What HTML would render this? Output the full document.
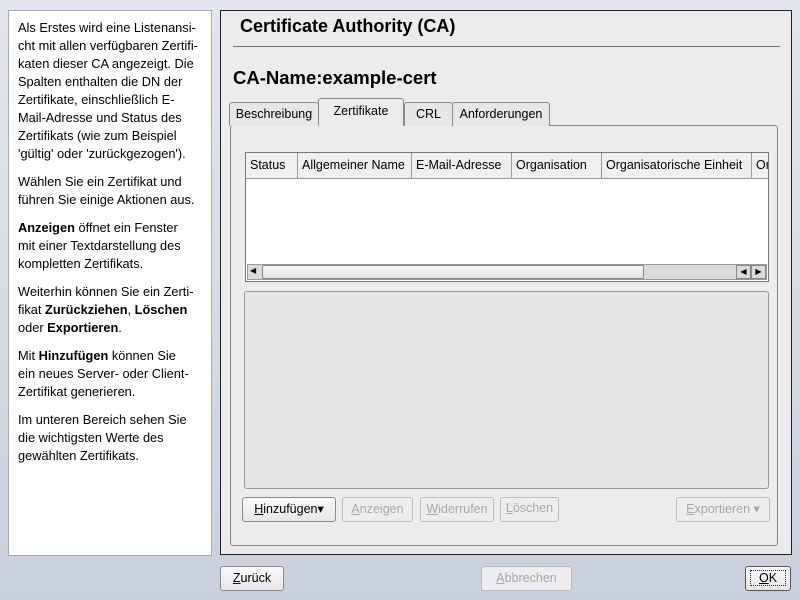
<!DOCTYPE html>
<html><head><style>
*{box-sizing:border-box;margin:0;padding:0}
body{width:800px;height:600px;overflow:hidden;background:linear-gradient(#e3e6ee,#c9d0dc);font-family:"Liberation Sans",sans-serif;font-size:12.5px;color:#000;position:relative}
.a{position:absolute}
#left{left:8px;top:10px;width:204px;height:546px;background:#fff;border:1px solid #a8a8b0;padding:8px 9px;line-height:18px;font-size:12.8px;white-space:nowrap}
#left p{margin-bottom:10px}
#main{left:220px;top:10px;width:572px;height:545px;background:#eeebee;border:1px solid #222}
.btn{position:absolute;height:25px;border:1px solid #888;border-radius:3px;background:linear-gradient(#fafafa,#e8e6e8);text-align:center;line-height:23px;font-size:12.5px}
.dis{color:#a8a8a8;border-color:#bbb;background:#efecef}
.tab{position:absolute;top:102px;height:24px;border:1px solid #888;border-bottom:none;background:#e8e6e8;line-height:22px;text-align:center;border-radius:3px 3px 0 0}
.th{position:absolute;top:0;height:25px;border-right:1px solid #999;line-height:25px;padding-left:4px;background:#f0eef0}
u{text-decoration:underline}
</style></head><body>
<div id="left" class="a">
<p>Als Erstes wird eine Listenansi-<br>cht mit allen verfügbaren Zertifi-<br>katen dieser CA angezeigt. Die<br>Spalten enthalten die DN der<br>Zertifikate, einschließlich E-<br>Mail-Adresse und Status des<br>Zertifikats (wie zum Beispiel<br>'gültig' oder 'zurückgezogen').</p>
<p>Wählen Sie ein Zertifikat und<br>führen Sie einige Aktionen aus.</p>
<p><b>Anzeigen</b> öffnet ein Fenster<br>mit einer Textdarstellung des<br>kompletten Zertifikats.</p>
<p>Weiterhin können Sie ein Zerti-<br>fikat <b>Zurückziehen</b>, <b>Löschen</b><br>oder <b>Exportieren</b>.</p>
<p>Mit <b>Hinzufügen</b> können Sie<br>ein neues Server- oder Client-<br>Zertifikat generieren.</p>
<p>Im unteren Bereich sehen Sie<br>die wichtigsten Werte des<br>gewählten Zertifikats.</p>
</div>
<div id="main" class="a"></div>
<div class="a" style="left:240px;top:16px;font-size:18px;font-weight:bold">Certificate Authority (CA)</div>
<div class="a" style="left:233px;top:46px;width:547px;height:1px;background:#777"></div>
<div class="a" style="left:233px;top:67px;font-size:18.5px;font-weight:bold">CA-Name:example-cert</div>
<div class="a" style="left:230px;top:125px;width:548px;height:421px;border:1px solid #888;border-radius:3px;background:#eeebee"></div>
<div class="tab" style="left:229px;width:90px">Beschreibung</div>
<div class="tab" style="left:318px;top:98px;height:28px;width:86px;background:#eeebee;line-height:24px;border-bottom:1px solid #eeebee">Zertifikate</div>
<div class="tab" style="left:404px;width:49px">CRL</div>
<div class="tab" style="left:452px;width:98px">Anforderungen</div>
<div class="a" style="left:245px;top:152px;width:524px;height:130px;border:1px solid #777;background:#fff;overflow:hidden">
<div class="th" style="left:0;width:52px">Status</div>
<div class="th" style="left:52px;width:114px">Allgemeiner Name</div>
<div class="th" style="left:166px;width:100px">E-Mail-Adresse</div>
<div class="th" style="left:266px;width:90px">Organisation</div>
<div class="th" style="left:356px;width:150px">Organisatorische Einheit</div>
<div class="th" style="left:506px;width:30px">Or</div>
<div class="a" style="left:0;top:25px;width:524px;height:1px;background:#999"></div>
<div class="a" style="left:1px;top:111px;width:520px;height:16px;background:#dcdadc;border:1px solid #999"></div>
<div class="a" style="left:16px;top:112px;width:382px;height:14px;background:linear-gradient(#f8f8f8,#e4e2e4);border:1px solid #888;border-radius:2px"></div>
<div class="a" style="left:4px;top:113px;font-size:8px">◀</div>
<div class="a" style="left:490px;top:112px;width:15px;height:14px;border:1px solid #888;font-size:8px;text-align:center;line-height:12px">◀</div>
<div class="a" style="left:505px;top:112px;width:15px;height:14px;border:1px solid #888;font-size:8px;text-align:center;line-height:12px">▶</div>
</div>
<div class="a" style="left:244px;top:291px;width:525px;height:198px;border:1px solid #999;border-radius:3px;background:#e8e5e8"></div>
<div class="btn" style="left:242px;top:497px;width:94px"><u>H</u>inzufügen▾</div>
<div class="btn dis" style="left:342px;top:497px;width:71px"><u>A</u>nzeigen</div>
<div class="btn dis" style="left:420px;top:497px;width:74px"><u>W</u>iderrufen</div>
<div class="btn dis" style="left:500px;top:497px;width:59px;line-height:21px"><u>L</u>öschen</div>
<div class="btn dis" style="left:676px;top:497px;width:94px"><u>E</u>xportieren ▾</div>
<div class="btn" style="left:220px;top:566px;width:64px"><u>Z</u>urück</div>
<div class="btn dis" style="left:481px;top:566px;width:91px"><u>A</u>bbrechen</div>
<div class="btn" style="left:745px;top:566px;width:46px;border-color:#555"><span style="border:1px dotted #333;padding:0 8px"><u>O</u>K</span></div>
</body></html>
